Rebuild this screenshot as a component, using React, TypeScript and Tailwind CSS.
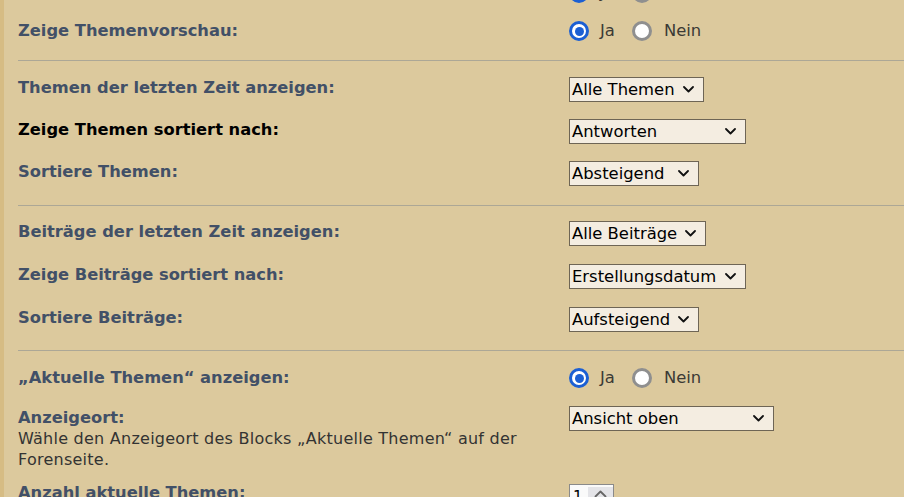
import React from "react";

const Radio = ({ checked }: { checked: boolean }) =>
  checked ? (
    <span className="flex h-[20px] w-[20px] shrink-0 items-center justify-center rounded-full border-[3px] border-[#1b5fd3] bg-white">
      <span className="h-[9px] w-[9px] rounded-full bg-[#1b5fd3]" />
    </span>
  ) : (
    <span className="h-[20px] w-[20px] shrink-0 rounded-full border-[3px] border-[#8f8f8f] bg-white" />
  );

const RadioPair = () => (
  <div className="flex items-center text-[16.4px] leading-[20px] text-[#3b3a35]">
    <Radio checked />
    <span className="ml-[11px] mr-[17px]">Ja</span>
    <Radio checked={false} />
    <span className="ml-[12px]">Nein</span>
  </div>
);

const Chevron = () => (
  <svg width="11" height="7" viewBox="0 0 11 7" className="shrink-0">
    <path d="M1 1 L5.5 5.5 L10 1" fill="none" stroke="#111" strokeWidth="1.8" strokeLinecap="round" strokeLinejoin="round" />
  </svg>
);

const Select = ({ text, w }: { text: string; w: string }) => (
  <div
    className={`flex h-[25px] items-center justify-between border border-[#6e6555] bg-[#f4ede1] pl-[2px] pr-[9px] text-[16.4px] leading-[20px] text-black ${w}`}
  >
    <span className="whitespace-nowrap">{text}</span>
    <Chevron />
  </div>
);

const Label = ({ children, black }: { children: React.ReactNode; black?: boolean }) => (
  <div className={`w-[551px] shrink-0 text-[16.3px] font-bold leading-[22px] ${black ? "text-black" : "text-[#425067]"}`}>
    {children}
  </div>
);

const RadioRow = ({ label }: { label: React.ReactNode }) => (
  <div className="flex h-[20px] items-center">
    <Label>{label}</Label>
    <RadioPair />
  </div>
);

export default function App() {
  return (
    <div className="h-[497px] w-[904px] overflow-hidden border-l-4 border-[#d6bc84] bg-[#dcc99d] font-['DejaVu_Sans','Verdana',sans-serif]">
      <div className="ml-[14px]">
        {/* Section 1 */}
        <div className="mt-[-17px] flex flex-col gap-[18px] pb-[19px]">
          <RadioRow label={<>&nbsp;</>} />
          <RadioRow label="Zeige Themenvorschau:" />
        </div>
        {/* Section 2 */}
        <div className="flex flex-col gap-[17px] border-t border-[#aca796] pb-[19px] pt-[16px]">
          <div className="flex items-start">
            <Label>Themen der letzten Zeit anzeigen:</Label>
            <Select text="Alle Themen" w="w-[135px]" />
          </div>
          <div className="flex items-start">
            <Label black>Zeige Themen sortiert nach:</Label>
            <Select text="Antworten" w="w-[177px]" />
          </div>
          <div className="flex items-start">
            <Label>Sortiere Themen:</Label>
            <Select text="Absteigend" w="w-[130px]" />
          </div>
        </div>
        {/* Section 3 */}
        <div className="flex flex-col gap-[18px] border-t border-[#aca796] pb-[18px] pt-[15px]">
          <div className="flex items-start">
            <Label>Beiträge der letzten Zeit anzeigen:</Label>
            <Select text="Alle Beiträge" w="w-[137px]" />
          </div>
          <div className="flex items-start">
            <Label>Zeige Beiträge sortiert nach:</Label>
            <Select text="Erstellungsdatum" w="w-[177px]" />
          </div>
          <div className="flex items-start">
            <Label>Sortiere Beiträge:</Label>
            <Select text="Aufsteigend" w="w-[130px]" />
          </div>
        </div>
        {/* Section 4 */}
        <div className="flex flex-col border-t border-[#aca796] pt-[17px]">
          <RadioRow label="„Aktuelle Themen“ anzeigen:" />
          <div className="mt-[18px] flex items-start">
            <div className="w-[551px] shrink-0 pt-[1px] leading-[21px]">
              <div className="text-[16.3px] font-bold text-[#425067]">Anzeigeort:</div>
              <div className="text-[16px] tracking-[0.25px] text-[#333333]">Wähle den Anzeigeort des Blocks „Aktuelle Themen“ auf der Forenseite.</div>
            </div>
            <Select text="Ansicht oben" w="w-[205px]" />
          </div>
          <div className="mt-[12px] flex items-start">
            <div className="w-[551px] shrink-0 text-[16.3px] font-bold leading-[21px] text-[#425067]">Anzahl aktuelle Themen:</div>
            <div className="mt-[2px] flex h-[25px] w-[45px] items-start border border-[#8a8a8a] bg-[#fafafa] pl-[3px] pt-[2px] text-[15px] leading-[20px] text-black">
              <span>1</span>
              <span className="ml-[5px] flex h-[14px] w-[29px] items-center justify-center bg-[#e4e4e8]">
                <svg width="13" height="8" viewBox="0 0 13 8">
                  <path d="M1.5 6.5 L6.5 1.5 L11.5 6.5" fill="none" stroke="#666" strokeWidth="1.8" strokeLinecap="round" strokeLinejoin="round" />
                </svg>
              </span>
            </div>
          </div>
        </div>
      </div>
    </div>
  );
}
